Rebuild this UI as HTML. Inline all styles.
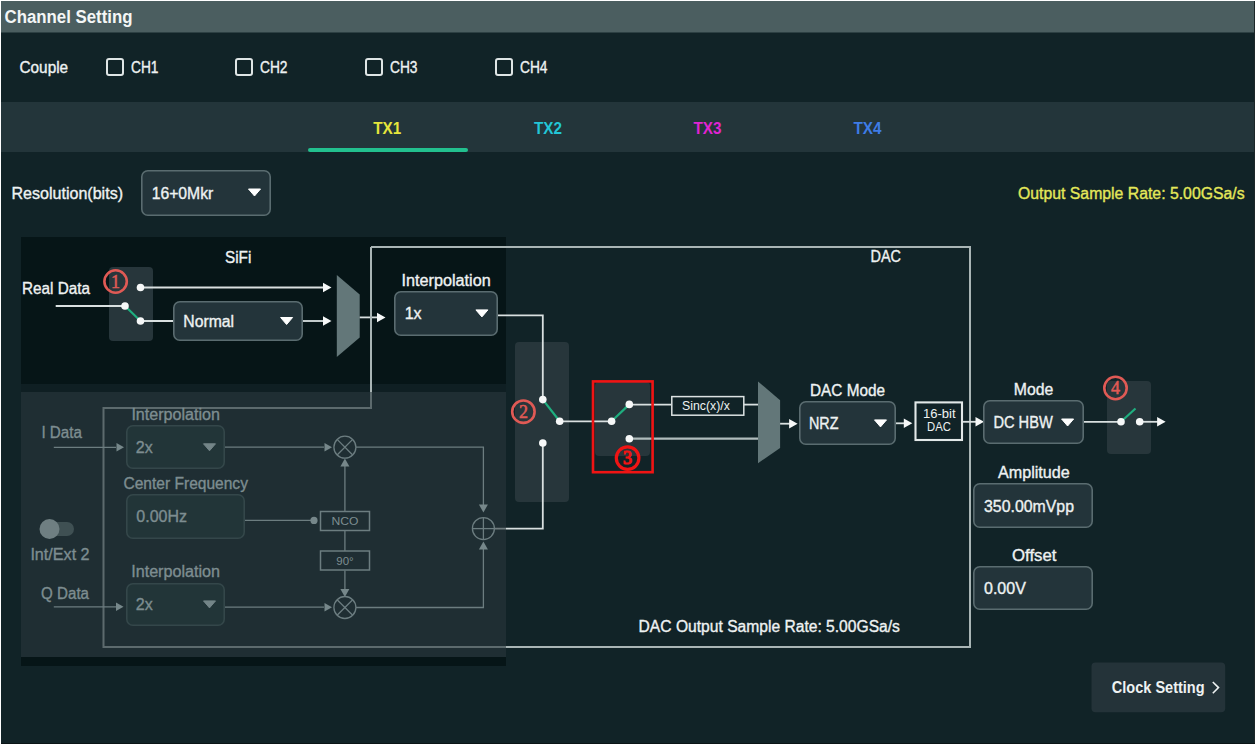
<!DOCTYPE html>
<html><head><meta charset="utf-8"><title>Channel Setting</title>
<style>html,body{margin:0;padding:0;background:#13222a;width:1256px;height:745px;overflow:hidden}</style>
</head><body><svg width="1256" height="745" viewBox="0 0 1256 745" style="display:block"><rect x="0" y="0" width="1256" height="745" fill="#ffffff" stroke="none" stroke-width="0" rx="0" />
<rect x="1" y="1" width="1254" height="743" fill="#112327" stroke="none" stroke-width="0" rx="0" />
<rect x="1" y="1" width="1254" height="31.5" fill="#4b5e60" stroke="none" stroke-width="0" rx="0" />
<rect x="1" y="102" width="1254" height="50" fill="#23353a" stroke="none" stroke-width="0" rx="0" />
<rect x="1254" y="1" width="1" height="743" fill="#1c2628" stroke="none" stroke-width="0" rx="0" />
<rect x="1" y="743" width="1254" height="1" fill="#0a1416" stroke="none" stroke-width="0" rx="0" />
<text x="4.5" y="23" font-size="17.5" fill="#f4f6f6" font-weight="bold" text-anchor="start" font-family='"Liberation Sans", sans-serif' textLength="128" lengthAdjust="spacingAndGlyphs" >Channel Setting</text>
<text x="19.5" y="73.2" font-size="16" fill="#eef2f2" stroke="#eef2f2" stroke-width="0.35" font-weight="normal" text-anchor="start" font-family='"Liberation Sans", sans-serif' textLength="48.6" lengthAdjust="spacingAndGlyphs" >Couple</text>
<rect x="107" y="59" width="16" height="16" fill="none" stroke="#dfe5e5" stroke-width="2" rx="2" />
<text x="131" y="73.2" font-size="16" fill="#eef2f2" stroke="#eef2f2" stroke-width="0.35" font-weight="normal" text-anchor="start" font-family='"Liberation Sans", sans-serif' textLength="27.5" lengthAdjust="spacingAndGlyphs" >CH1</text>
<rect x="236" y="59" width="16" height="16" fill="none" stroke="#dfe5e5" stroke-width="2" rx="2" />
<text x="260" y="73.2" font-size="16" fill="#eef2f2" stroke="#eef2f2" stroke-width="0.35" font-weight="normal" text-anchor="start" font-family='"Liberation Sans", sans-serif' textLength="27.5" lengthAdjust="spacingAndGlyphs" >CH2</text>
<rect x="366" y="59" width="16" height="16" fill="none" stroke="#dfe5e5" stroke-width="2" rx="2" />
<text x="390" y="73.2" font-size="16" fill="#eef2f2" stroke="#eef2f2" stroke-width="0.35" font-weight="normal" text-anchor="start" font-family='"Liberation Sans", sans-serif' textLength="27.5" lengthAdjust="spacingAndGlyphs" >CH3</text>
<rect x="496" y="59" width="16" height="16" fill="none" stroke="#dfe5e5" stroke-width="2" rx="2" />
<text x="520" y="73.2" font-size="16" fill="#eef2f2" stroke="#eef2f2" stroke-width="0.35" font-weight="normal" text-anchor="start" font-family='"Liberation Sans", sans-serif' textLength="27.5" lengthAdjust="spacingAndGlyphs" >CH4</text>
<text x="387.3" y="133.5" font-size="16" fill="#e6e63c" font-weight="bold" text-anchor="middle" font-family='"Liberation Sans", sans-serif' textLength="28" lengthAdjust="spacingAndGlyphs" >TX1</text>
<text x="548" y="133.5" font-size="16" fill="#22c6d6" font-weight="bold" text-anchor="middle" font-family='"Liberation Sans", sans-serif' textLength="28" lengthAdjust="spacingAndGlyphs" >TX2</text>
<text x="707.5" y="133.5" font-size="16" fill="#e024d2" font-weight="bold" text-anchor="middle" font-family='"Liberation Sans", sans-serif' textLength="28" lengthAdjust="spacingAndGlyphs" >TX3</text>
<text x="867.5" y="133.5" font-size="16" fill="#3e7ce6" font-weight="bold" text-anchor="middle" font-family='"Liberation Sans", sans-serif' textLength="28" lengthAdjust="spacingAndGlyphs" >TX4</text>
<rect x="308" y="148" width="160" height="4" fill="#22c08e" stroke="none" stroke-width="0" rx="2" />
<text x="11.5" y="199" font-size="16" fill="#eef2f2" stroke="#eef2f2" stroke-width="0.35" font-weight="normal" text-anchor="start" font-family='"Liberation Sans", sans-serif' textLength="111.5" lengthAdjust="spacingAndGlyphs" >Resolution(bits)</text>
<rect x="141.8" y="170.8" width="128.4" height="44.4" fill="#23343a" stroke="#5a6c70" stroke-width="1.6" rx="6" />
<text x="151.7" y="199" font-size="16" fill="#eef2f2" stroke="#eef2f2" stroke-width="0.35" font-weight="normal" text-anchor="start" font-family='"Liberation Sans", sans-serif' textLength="61.6" lengthAdjust="spacingAndGlyphs" >16+0Mkr</text>
<polygon points="248.5,189.0 260.5,189.0 254.5,196.0" fill="#ffffff" stroke="#ffffff" stroke-width="1" stroke-linejoin="round"/>
<text x="1244.6" y="198.5" font-size="16" fill="#e4e85a" stroke="#e4e85a" stroke-width="0.35" font-weight="normal" text-anchor="end" font-family='"Liberation Sans", sans-serif' textLength="226.6" lengthAdjust="spacingAndGlyphs" >Output Sample Rate: 5.00GSa/s</text>
<rect x="21" y="384" width="485" height="8" fill="#0f1f23" stroke="none" stroke-width="0" rx="0" />
<rect x="21" y="237" width="485" height="147" fill="#061517" stroke="none" stroke-width="0" rx="0" />
<rect x="21" y="657" width="485" height="9" fill="#061517" stroke="none" stroke-width="0" rx="0" />
<rect x="21" y="392" width="485" height="265" fill="#0f1f23" stroke="none" stroke-width="0" rx="0" />
<rect x="109" y="267" width="44" height="74" fill="#27363b" stroke="none" stroke-width="0" rx="4" />
<rect x="515" y="342" width="54" height="160" fill="#27363b" stroke="none" stroke-width="0" rx="4" />
<rect x="595" y="382" width="55" height="74" fill="#27363b" stroke="none" stroke-width="0" rx="4" />
<rect x="1107" y="381" width="44" height="73" fill="#27363b" stroke="none" stroke-width="0" rx="4" />
<text x="225" y="262.5" font-size="16" fill="#eef2f2" stroke="#eef2f2" stroke-width="0.35" font-weight="normal" text-anchor="start" font-family='"Liberation Sans", sans-serif' textLength="26.3" lengthAdjust="spacingAndGlyphs" >SiFi</text>
<text x="22" y="294" font-size="16" fill="#eef2f2" stroke="#eef2f2" stroke-width="0.35" font-weight="normal" text-anchor="start" font-family='"Liberation Sans", sans-serif' textLength="68" lengthAdjust="spacingAndGlyphs" >Real Data</text>
<polyline points="55.7,306 125,306" fill="none" stroke="#d9e0e0" stroke-width="1.8" />
<polyline points="125,306 140.5,321" fill="none" stroke="#1fae7f" stroke-width="2.2" />
<polyline points="140.5,287.5 324,287.5" fill="none" stroke="#d9e0e0" stroke-width="1.8" />
<polygon points="331.5,287.5 323.0,282.75 323.0,292.25" fill="#f6f8f8"/>
<polyline points="140.5,321 173,321" fill="none" stroke="#d9e0e0" stroke-width="1.8" />
<rect x="173.8" y="301.8" width="128.4" height="38.4" fill="#23343a" stroke="#5a6c70" stroke-width="1.6" rx="6" />
<text x="183.3" y="327" font-size="16" fill="#eef2f2" stroke="#eef2f2" stroke-width="0.35" font-weight="normal" text-anchor="start" font-family='"Liberation Sans", sans-serif' textLength="50.8" lengthAdjust="spacingAndGlyphs" >Normal</text>
<polygon points="280.6,317.5 292.6,317.5 286.6,324.5" fill="#ffffff" stroke="#ffffff" stroke-width="1" stroke-linejoin="round"/>
<polyline points="303,321 324,321" fill="none" stroke="#d9e0e0" stroke-width="1.8" />
<polygon points="331.5,321 323.0,316.25 323.0,325.75" fill="#f6f8f8"/>
<polygon points="336.8,275 359.7,294.5 359.7,337.5 336.8,357" fill="#637779"/>
<polyline points="359.7,317.4 378,317.4" fill="none" stroke="#d9e0e0" stroke-width="1.8" />
<polygon points="385.5,317.4 377.0,312.65 377.0,322.15" fill="#f6f8f8"/>
<circle cx="115.6" cy="281.5" r="11.2" fill="none" stroke="#e05a55" stroke-width="2.6"/>
<text x="115.6" y="287.8" font-size="18" font-weight="normal" fill="#e05a55" stroke="#e05a55" stroke-width="0.5" text-anchor="middle" font-family='"Liberation Serif", serif'>1</text>
<polyline points="371,247 970,247 970,647 103.5,647 103.5,408 371,408 371,247" fill="none" stroke="#a9b5b5" stroke-width="2" />
<text x="870.5" y="262.2" font-size="16" fill="#eef2f2" stroke="#eef2f2" stroke-width="0.35" font-weight="normal" text-anchor="start" font-family='"Liberation Sans", sans-serif' textLength="30.4" lengthAdjust="spacingAndGlyphs" >DAC</text>
<text x="401.5" y="286" font-size="16" fill="#eef2f2" stroke="#eef2f2" stroke-width="0.35" font-weight="normal" text-anchor="start" font-family='"Liberation Sans", sans-serif' textLength="89.2" lengthAdjust="spacingAndGlyphs" >Interpolation</text>
<rect x="394.8" y="291.8" width="102.4" height="43.4" fill="#23343a" stroke="#5a6c70" stroke-width="1.6" rx="6" />
<text x="404.7" y="319" font-size="16" fill="#eef2f2" stroke="#eef2f2" stroke-width="0.35" font-weight="normal" text-anchor="start" font-family='"Liberation Sans", sans-serif' >1x</text>
<polygon points="475.9,309.9 487.9,309.9 481.9,316.9" fill="#ffffff" stroke="#ffffff" stroke-width="1" stroke-linejoin="round"/>
<polyline points="498,315.4 542.8,315.4 542.8,399.6" fill="none" stroke="#d9e0e0" stroke-width="1.8" />
<polyline points="542.8,399.6 559.7,421.3" fill="none" stroke="#1fae7f" stroke-width="2.2" />
<polyline points="542.8,443 542.8,528.6 494,528.6" fill="none" stroke="#d9e0e0" stroke-width="1.8" />
<polyline points="559.7,421.3 611.6,421.3" fill="none" stroke="#d9e0e0" stroke-width="1.8" />
<polyline points="611.6,421.3 629.3,404.4" fill="none" stroke="#1fae7f" stroke-width="2.2" />
<polyline points="629.3,404.6 671,404.6" fill="none" stroke="#d9e0e0" stroke-width="1.8" />
<rect x="671.8" y="396.6" width="72" height="18.6" fill="none" stroke="#dde3e3" stroke-width="1.5" rx="0" />
<text x="682" y="409.6" font-size="12.5" fill="#eef2f2" font-weight="normal" text-anchor="start" font-family='"Liberation Sans", sans-serif' textLength="47.8" lengthAdjust="spacingAndGlyphs" >Sinc(x)/x</text>
<polyline points="744,404.6 758,404.6" fill="none" stroke="#d9e0e0" stroke-width="1.8" />
<polyline points="629.3,438.7 758,438.7" fill="none" stroke="#b0bcbc" stroke-width="2.2" />
<polygon points="758,381.4 780.1,400.2 780.1,447.9 758,463.3" fill="#637779"/>
<polyline points="780.1,423.7 790,423.7" fill="none" stroke="#d9e0e0" stroke-width="1.8" />
<polygon points="797.6,423.7 789.1,418.95 789.1,428.45" fill="#f6f8f8"/>
<text x="810" y="396" font-size="16" fill="#eef2f2" stroke="#eef2f2" stroke-width="0.35" font-weight="normal" text-anchor="start" font-family='"Liberation Sans", sans-serif' textLength="75" lengthAdjust="spacingAndGlyphs" >DAC Mode</text>
<rect x="799.8" y="401.8" width="95.4" height="42.4" fill="#23343a" stroke="#5a6c70" stroke-width="1.6" rx="6" />
<text x="809" y="429" font-size="16" fill="#eef2f2" stroke="#eef2f2" stroke-width="0.35" font-weight="normal" text-anchor="start" font-family='"Liberation Sans", sans-serif' textLength="29.5" lengthAdjust="spacingAndGlyphs" >NRZ</text>
<polygon points="874.5,419.9 886.5,419.9 880.5,426.9" fill="#ffffff" stroke="#ffffff" stroke-width="1" stroke-linejoin="round"/>
<polyline points="896,423.3 904,423.3" fill="none" stroke="#d9e0e0" stroke-width="1.8" />
<polygon points="912.3,423.3 903.8,418.55 903.8,428.05" fill="#f6f8f8"/>
<rect x="915.5" y="402.4" width="46.5" height="37.6" fill="none" stroke="#e2e8e8" stroke-width="2.1" rx="0" />
<text x="923" y="417.8" font-size="12.5" fill="#eef2f2" font-weight="normal" text-anchor="start" font-family='"Liberation Sans", sans-serif' textLength="32.6" lengthAdjust="spacingAndGlyphs" >16-bit</text>
<text x="927" y="431" font-size="12.5" fill="#eef2f2" font-weight="normal" text-anchor="start" font-family='"Liberation Sans", sans-serif' textLength="23.8" lengthAdjust="spacingAndGlyphs" >DAC</text>
<polyline points="963,421.8 976,421.8" fill="none" stroke="#d9e0e0" stroke-width="1.8" />
<polygon points="984,421.8 975.5,417.05 975.5,426.55" fill="#f6f8f8"/>
<text x="1013.8" y="395" font-size="16" fill="#eef2f2" stroke="#eef2f2" stroke-width="0.35" font-weight="normal" text-anchor="start" font-family='"Liberation Sans", sans-serif' textLength="39.5" lengthAdjust="spacingAndGlyphs" >Mode</text>
<rect x="983.8" y="400.8" width="99.4" height="42.4" fill="#23343a" stroke="#5a6c70" stroke-width="1.6" rx="6" />
<text x="993.4" y="427.7" font-size="16" fill="#eef2f2" stroke="#eef2f2" stroke-width="0.35" font-weight="normal" text-anchor="start" font-family='"Liberation Sans", sans-serif' textLength="59.4" lengthAdjust="spacingAndGlyphs" >DC HBW</text>
<polygon points="1061.6,419.0 1073.6,419.0 1067.6,426.0" fill="#ffffff" stroke="#ffffff" stroke-width="1" stroke-linejoin="round"/>
<polyline points="1084,421.8 1121,421.8" fill="none" stroke="#d9e0e0" stroke-width="1.8" />
<polyline points="1121,421.8 1135.5,408.5" fill="none" stroke="#1fae7f" stroke-width="2.2" />
<polyline points="1139.7,421.8 1158,421.8" fill="none" stroke="#d9e0e0" stroke-width="1.8" />
<polygon points="1165.6,421.8 1157.1,417.05 1157.1,426.55" fill="#f6f8f8"/>
<circle cx="523.4" cy="411.7" r="11.2" fill="none" stroke="#e05a55" stroke-width="2.6"/>
<text x="523.4" y="418.0" font-size="18" font-weight="normal" fill="#e05a55" stroke="#e05a55" stroke-width="0.5" text-anchor="middle" font-family='"Liberation Serif", serif'>2</text>
<rect x="593" y="381.4" width="59.6" height="90.8" fill="none" stroke="#f01414" stroke-width="2.6" rx="0" />
<circle cx="627.6" cy="458.1" r="11.3" fill="none" stroke="#f01414" stroke-width="3.2"/>
<text x="627.6" y="464.40000000000003" font-size="18" font-weight="normal" fill="#f01414" stroke="#f01414" stroke-width="1.2" text-anchor="middle" font-family='"Liberation Serif", serif'>3</text>
<circle cx="1115.5" cy="388" r="11.2" fill="none" stroke="#e05a55" stroke-width="2.6"/>
<text x="1115.5" y="394.3" font-size="18" font-weight="normal" fill="#e05a55" stroke="#e05a55" stroke-width="0.5" text-anchor="middle" font-family='"Liberation Serif", serif'>4</text>
<text x="998" y="478.3" font-size="16" fill="#eef2f2" stroke="#eef2f2" stroke-width="0.35" font-weight="normal" text-anchor="start" font-family='"Liberation Sans", sans-serif' textLength="71.7" lengthAdjust="spacingAndGlyphs" >Amplitude</text>
<rect x="973.8" y="483.8" width="118.4" height="43.4" fill="#23343a" stroke="#5a6c70" stroke-width="1.6" rx="6" />
<text x="984" y="511.5" font-size="16" fill="#eef2f2" stroke="#eef2f2" stroke-width="0.35" font-weight="normal" text-anchor="start" font-family='"Liberation Sans", sans-serif' textLength="90" lengthAdjust="spacingAndGlyphs" >350.00mVpp</text>
<text x="1012" y="561" font-size="16" fill="#eef2f2" stroke="#eef2f2" stroke-width="0.35" font-weight="normal" text-anchor="start" font-family='"Liberation Sans", sans-serif' textLength="44.4" lengthAdjust="spacingAndGlyphs" >Offset</text>
<rect x="973.8" y="566.8" width="118.4" height="42.4" fill="#23343a" stroke="#5a6c70" stroke-width="1.6" rx="6" />
<text x="984" y="594" font-size="16" fill="#eef2f2" stroke="#eef2f2" stroke-width="0.35" font-weight="normal" text-anchor="start" font-family='"Liberation Sans", sans-serif' >0.00V</text>
<text x="638.6" y="631.8" font-size="16" fill="#eef2f2" stroke="#eef2f2" stroke-width="0.35" font-weight="normal" text-anchor="start" font-family='"Liberation Sans", sans-serif' textLength="261.3" lengthAdjust="spacingAndGlyphs" >DAC Output Sample Rate: 5.00GSa/s</text>
<rect x="1091.5" y="662.5" width="133.7" height="49.7" fill="#243339" stroke="none" stroke-width="0" rx="4" />
<text x="1111.8" y="693.3" font-size="16" fill="#eef2f2" font-weight="bold" text-anchor="start" font-family='"Liberation Sans", sans-serif' textLength="92.8" lengthAdjust="spacingAndGlyphs" >Clock Setting</text>
<polyline points="1212.8,682 1218.5,687.6 1212.8,693.2" fill="none" stroke="#eef2f2" stroke-width="1.6" />
<rect x="21" y="392" width="485" height="265" fill="rgba(42,56,62,0.6)" stroke="none" stroke-width="0" rx="0" />
<text x="41.4" y="438" font-size="16" fill="#7d8d90" stroke="#7d8d90" stroke-width="0.35" font-weight="normal" text-anchor="start" font-family='"Liberation Sans", sans-serif' textLength="40.6" lengthAdjust="spacingAndGlyphs" >I Data</text>
<polyline points="53.8,447.3 116,447.3" fill="none" stroke="#6c7d80" stroke-width="1.3" />
<polygon points="124,447.3 116.5,443.05 116.5,451.55" fill="#76878a"/>
<text x="131.4" y="420.4" font-size="16" fill="#7d8d90" stroke="#7d8d90" stroke-width="0.35" font-weight="normal" text-anchor="start" font-family='"Liberation Sans", sans-serif' textLength="88.6" lengthAdjust="spacingAndGlyphs" >Interpolation</text>
<rect x="126.8" y="425.8" width="97.4" height="42.4" fill="#223538" stroke="#34474a" stroke-width="1.6" rx="6" />
<text x="135.8" y="453.2" font-size="16" fill="#7d8d90" stroke="#7d8d90" stroke-width="0.35" font-weight="normal" text-anchor="start" font-family='"Liberation Sans", sans-serif' >2x</text>
<polygon points="203.5,443.8 215.5,443.8 209.5,450.8" fill="#748588" stroke="#748588" stroke-width="1" stroke-linejoin="round"/>
<polyline points="225,447.2 324,447.2" fill="none" stroke="#6c7d80" stroke-width="1.3" />
<polygon points="332,447.2 324.5,442.95 324.5,451.45" fill="#76878a"/>
<circle cx="344.9" cy="447.2" r="11" fill="none" stroke="#6c7d80" stroke-width="1.3"/>
<polyline points="337.1,439.4 352.7,455" fill="none" stroke="#6c7d80" stroke-width="1.3" />
<polyline points="352.7,439.4 337.1,455" fill="none" stroke="#6c7d80" stroke-width="1.3" />
<polyline points="356,447.2 483.4,447.2 483.4,505" fill="none" stroke="#6c7d80" stroke-width="1.3" />
<polygon points="483.4,512.5 478.9,504.5 487.9,504.5" fill="#76878a"/>
<circle cx="483.4" cy="528.6" r="11" fill="none" stroke="#6c7d80" stroke-width="1.3"/>
<polyline points="472.4,528.6 494.4,528.6" fill="none" stroke="#6c7d80" stroke-width="1.3" />
<polyline points="483.4,517.6 483.4,539.6" fill="none" stroke="#6c7d80" stroke-width="1.3" />
<polyline points="356,607.5 483.4,607.5 483.4,549" fill="none" stroke="#6c7d80" stroke-width="1.3" />
<polygon points="483.4,541.6 478.9,549.6 487.9,549.6" fill="#76878a"/>
<text x="123.5" y="489" font-size="16" fill="#7d8d90" stroke="#7d8d90" stroke-width="0.35" font-weight="normal" text-anchor="start" font-family='"Liberation Sans", sans-serif' textLength="124.4" lengthAdjust="spacingAndGlyphs" >Center Frequency</text>
<rect x="126.8" y="494.8" width="117.4" height="43.4" fill="#223538" stroke="#34474a" stroke-width="1.6" rx="6" />
<text x="136.3" y="522" font-size="16" fill="#7d8d90" stroke="#7d8d90" stroke-width="0.35" font-weight="normal" text-anchor="start" font-family='"Liberation Sans", sans-serif' >0.00Hz</text>
<polyline points="245,520.4 314,520.4" fill="none" stroke="#6c7d80" stroke-width="1.3" />
<circle cx="314" cy="520.4" r="3.6" fill="#76878a"/>
<rect x="320.5" y="511.5" width="49" height="19" fill="none" stroke="#6c7d80" stroke-width="1.5" rx="0" />
<text x="345" y="525" font-size="11.5" fill="#7d8d90" font-weight="normal" text-anchor="middle" font-family='"Liberation Sans", sans-serif' textLength="27" lengthAdjust="spacingAndGlyphs" >NCO</text>
<polyline points="344.9,511.5 344.9,466" fill="none" stroke="#6c7d80" stroke-width="1.3" />
<polygon points="344.9,458.4 340.4,466.4 349.4,466.4" fill="#76878a"/>
<polyline points="344.9,530.5 344.9,551" fill="none" stroke="#6c7d80" stroke-width="1.3" />
<rect x="320.5" y="551" width="49" height="19" fill="none" stroke="#6c7d80" stroke-width="1.5" rx="0" />
<text x="345" y="565" font-size="11.5" fill="#7d8d90" font-weight="normal" text-anchor="middle" font-family='"Liberation Sans", sans-serif' >90°</text>
<polyline points="344.9,570.5 344.9,589" fill="none" stroke="#6c7d80" stroke-width="1.3" />
<polygon points="344.9,597 340.4,589 349.4,589" fill="#76878a"/>
<circle cx="344.9" cy="607.5" r="11" fill="none" stroke="#6c7d80" stroke-width="1.3"/>
<polyline points="337.1,599.7 352.7,615.3" fill="none" stroke="#6c7d80" stroke-width="1.3" />
<polyline points="352.7,599.7 337.1,615.3" fill="none" stroke="#6c7d80" stroke-width="1.3" />
<text x="131.2" y="577" font-size="16" fill="#7d8d90" stroke="#7d8d90" stroke-width="0.35" font-weight="normal" text-anchor="start" font-family='"Liberation Sans", sans-serif' textLength="88.8" lengthAdjust="spacingAndGlyphs" >Interpolation</text>
<rect x="126.8" y="583.8" width="97.4" height="41.4" fill="#223538" stroke="#34474a" stroke-width="1.6" rx="6" />
<text x="135.8" y="610" font-size="16" fill="#7d8d90" stroke="#7d8d90" stroke-width="0.35" font-weight="normal" text-anchor="start" font-family='"Liberation Sans", sans-serif' >2x</text>
<polygon points="203.5,600.9 215.5,600.9 209.5,607.9" fill="#748588" stroke="#748588" stroke-width="1" stroke-linejoin="round"/>
<polyline points="225,607.2 324,607.2" fill="none" stroke="#6c7d80" stroke-width="1.3" />
<polygon points="332,607.2 324.5,602.95 324.5,611.45" fill="#76878a"/>
<text x="41.1" y="598.6" font-size="16" fill="#7d8d90" stroke="#7d8d90" stroke-width="0.35" font-weight="normal" text-anchor="start" font-family='"Liberation Sans", sans-serif' textLength="47.9" lengthAdjust="spacingAndGlyphs" >Q Data</text>
<polyline points="53.8,606.8 116,606.8" fill="none" stroke="#6c7d80" stroke-width="1.3" />
<polygon points="123.5,606.8 116.0,602.55 116.0,611.05" fill="#76878a"/>
<rect x="40" y="522" width="34" height="14" fill="#3f5053" stroke="none" stroke-width="0" rx="7" />
<circle cx="49.5" cy="529" r="10" fill="#6f7f82"/>
<text x="30.4" y="559.8" font-size="16" fill="#7d8d90" stroke="#7d8d90" stroke-width="0.35" font-weight="normal" text-anchor="start" font-family='"Liberation Sans", sans-serif' textLength="59.2" lengthAdjust="spacingAndGlyphs" >Int/Ext 2</text>
<circle cx="140.5" cy="287.5" r="3.8" fill="#f6f8f8"/>
<circle cx="125" cy="306" r="3.8" fill="#f6f8f8"/>
<circle cx="140.5" cy="321" r="3.8" fill="#f6f8f8"/>
<circle cx="542.8" cy="399.6" r="3.8" fill="#f6f8f8"/>
<circle cx="542.8" cy="443" r="3.8" fill="#f6f8f8"/>
<circle cx="559.7" cy="421.3" r="3.8" fill="#f6f8f8"/>
<circle cx="611.6" cy="421.3" r="3.8" fill="#f6f8f8"/>
<circle cx="629.3" cy="404.4" r="3.8" fill="#f6f8f8"/>
<circle cx="629.3" cy="438.7" r="3.8" fill="#f6f8f8"/>
<circle cx="1121" cy="421.8" r="3.8" fill="#f6f8f8"/>
<circle cx="1139.7" cy="421.8" r="3.8" fill="#f6f8f8"/></svg></body></html>
